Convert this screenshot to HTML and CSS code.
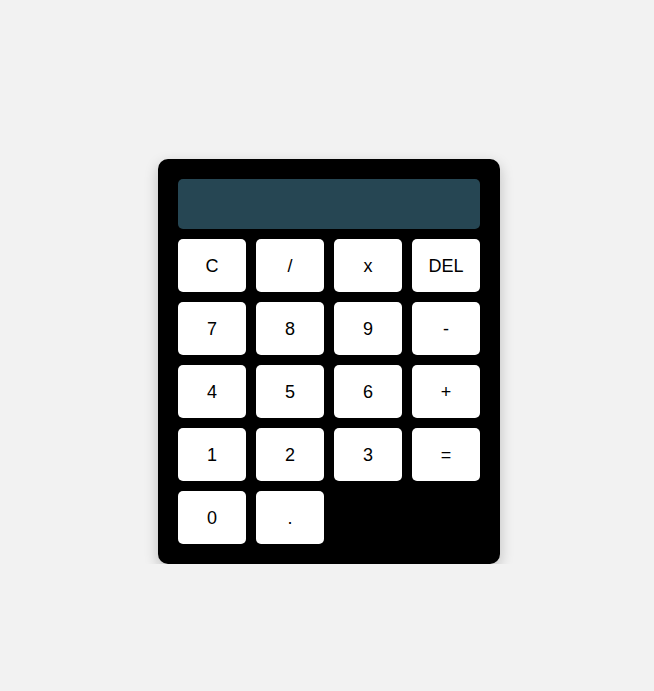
FILE: index.html
```html
<!DOCTYPE html>
<html>
<head>
<meta charset="utf-8">
<link rel="stylesheet" href="styles.css">
</head>
<body>
<div class="page">
  <div class="calc">
    <div class="display"></div>
    <div class="keys">
      <button class="key">C</button>
      <button class="key">/</button>
      <button class="key">x</button>
      <button class="key">DEL</button>
      <button class="key">7</button>
      <button class="key">8</button>
      <button class="key">9</button>
      <button class="key">-</button>
      <button class="key">4</button>
      <button class="key">5</button>
      <button class="key">6</button>
      <button class="key">+</button>
      <button class="key">1</button>
      <button class="key">2</button>
      <button class="key">3</button>
      <button class="key">=</button>
      <button class="key">0</button>
      <button class="key">.</button>
    </div>
  </div>
</div>
</body>
</html>
```
FILE: styles.css
```css
html, body {
  margin: 0;
  padding: 0;
  background: #f2f2f2;
  font-family: "Liberation Sans", Arial, sans-serif;
}
.page {
  padding: 159px 0 0 158px;
}
.calc {
  width: 302px;
  padding: 20px;
  background: #000;
  border-radius: 10px;
  box-shadow: 0 5px 14px rgba(0, 0, 0, 0.22);
}
.display {
  height: 50px;
  background: #264653;
  border-radius: 5px;
  margin-bottom: 10px;
}
.keys {
  display: grid;
  grid-template-columns: repeat(4, 68px);
  grid-auto-rows: 53px;
  gap: 10px;
}
.key {
  border: none;
  background: #fff;
  border-radius: 5px;
  font-family: "Liberation Sans", Arial, sans-serif;
  font-size: 18px;
  color: #000;
  padding: 2px 0 0 0;
}
```
